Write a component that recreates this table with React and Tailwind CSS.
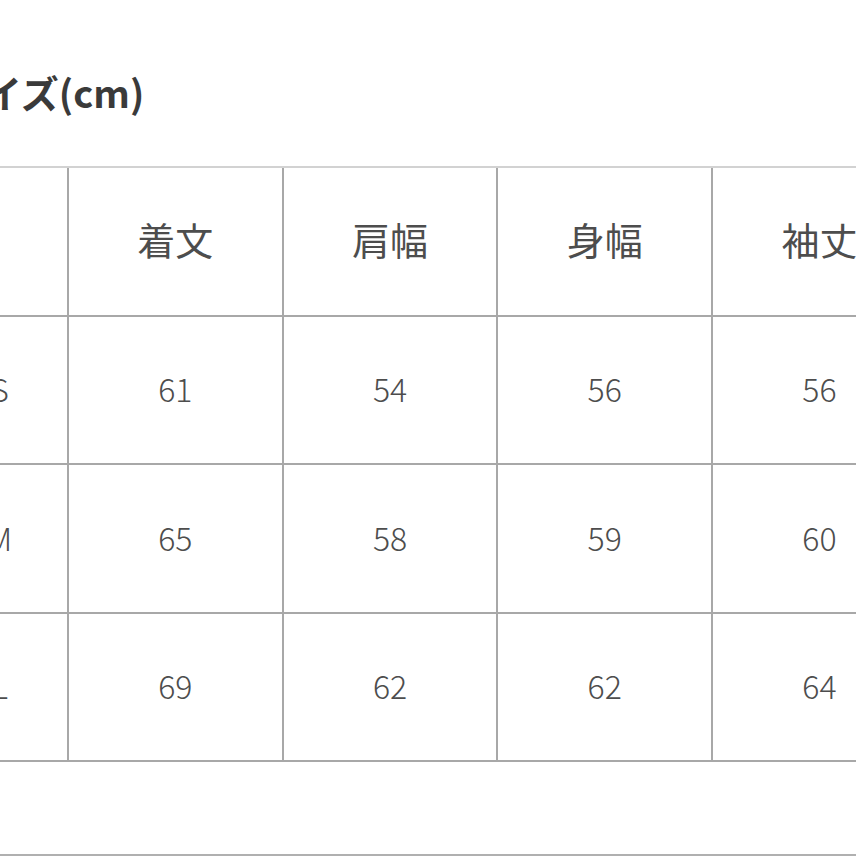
const headers = ["着文", "肩幅", "身幅", "袖丈"];
const rows = [
  { size: "S", values: ["61", "54", "56", "56"] },
  { size: "M", values: ["65", "58", "59", "60"] },
  { size: "L", values: ["69", "62", "62", "64"] },
];

const font = { fontFamily: '"Noto Sans CJK JP", "Noto Sans", sans-serif' };

function Cell({ first, head, children }) {
  return (
    <div
      className={`${first ? "w-[151px] pl-[14px]" : "w-[214.7px]"} ${head ? "pb-[6px]" : "pb-[3px]"} shrink-0 h-[148.5px] border-r-2 border-b-2 border-[#a8a8a8] flex items-center justify-center text-[32px] font-light text-[#4d4d4d]`}
    >
      {children}
    </div>
  );
}

export default function App() {
  return (
    <div className="w-[856px] h-[856px] overflow-hidden bg-white" style={font}>
      <div className="pt-[66px] h-[166px]">
        <h2 className="ml-[-54px] text-[38px] font-bold text-[#3a3a3a] leading-[52px] whitespace-nowrap">
          サイズ(cm)
        </h2>
      </div>
      <div className="ml-[-82px] border-t-2 border-[#d2d2d2] w-[1100px]">
        <div className="flex">
          <Cell first head />
          {headers.map((h) => (
            <Cell key={h} head>
              <span className="text-[38px] font-normal">{h}</span>
            </Cell>
          ))}
        </div>
        {rows.map((r) => (
          <div key={r.size} className="flex">
            <Cell first>{r.size}</Cell>
            {r.values.map((v, i) => (
              <Cell key={i}>{v}</Cell>
            ))}
          </div>
        ))}
      </div>
      <div className="mt-[92px] h-[2px] bg-[#b0b0b0]"></div>
    </div>
  );
}
